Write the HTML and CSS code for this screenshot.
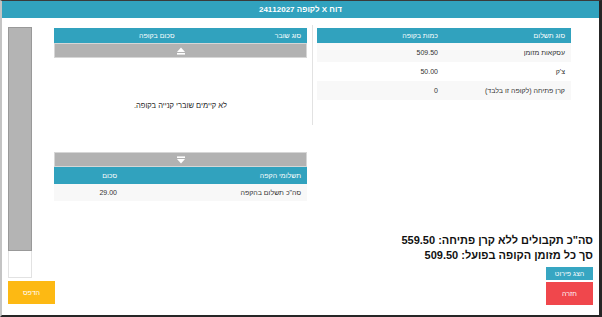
FILE: index.html
```html
<!DOCTYPE html>
<html lang="he" dir="rtl">
<head>
<meta charset="utf-8">
<title>דוח X לקופה</title>
<link rel="stylesheet" href="styles.css">
</head>
<body>
<div class="frame">
  <div class="titlebar">דוח X לקופה 24112027</div>
  <div class="workspace">
    <div class="main">
      <div class="tables">
        <div class="pay-table">
          <table class="grid">
            <thead>
              <tr><th>סוג תשלום</th><th>כמות בקופה</th></tr>
            </thead>
            <tbody>
              <tr><td>עסקאות מזומן</td><td>509.50</td></tr>
              <tr><td>צ'ק</td><td>50.00</td></tr>
              <tr><td>קרן פתיחה (לקופה זו בלבד)</td><td>0</td></tr>
            </tbody>
          </table>
        </div>
        <div class="divider"></div>
        <div class="middle">
          <table class="grid">
            <thead>
              <tr><th>סוג שובר</th><th>סכום בקופה</th></tr>
            </thead>
          </table>
          <div class="pager">
            <svg width="8" height="8" viewBox="0 0 8 8"><polygon points="0,5 4,0.5 8,5" fill="#fff"/><rect x="0" y="6" width="8" height="1.6" fill="#fff"/></svg>
          </div>
          <div class="empty">לא קיימים שוברי קנייה בקופה.</div>
          <div class="pager">
            <svg width="8" height="8" viewBox="0 0 8 8"><rect x="0" y="0.4" width="8" height="1.6" fill="#fff"/><polygon points="0,3 8,3 4,7.5" fill="#fff"/></svg>
          </div>
          <table class="grid credit">
            <thead>
              <tr><th class="wide">תשלומי הקפה</th><th>סכום</th></tr>
            </thead>
            <tbody>
              <tr><td>סה"כ תשלום בהקפה</td><td>29.00</td></tr>
            </tbody>
          </table>
        </div>
      </div>
      <div class="summary">
        <div class="total">סה"כ תקבולים ללא קרן פתיחה: 559.50</div>
        <div class="total">סך כל מזומן הקופה בפועל: 509.50</div>
        <div class="btn btn-detail">הצג פירוט</div>
        <div class="btn btn-back">חזרה</div>
      </div>
    </div>
    <div class="side">
      <div class="scroll-track"></div>
      <div class="scroll-rest"></div>
      <div class="btn btn-print">הדפס</div>
    </div>
  </div>
</div>
</body>
</html>
```
FILE: styles.css
```css
html, body {
  margin: 0;
  padding: 0;
}
body {
  font-family: "Liberation Sans", "DejaVu Sans", Arial, sans-serif;
  width: 602px;
  height: 317px;
  overflow: hidden;
  background: #fff;
}
.frame {
  box-sizing: border-box;
  width: 602px;
  height: 317px;
  border-top: 1px solid #3a3a3a;
  border-right: 3px solid #262626;
  border-bottom: 2px solid #262626;
  border-left: 2px solid #c4c4c4;
  display: flex;
  flex-direction: column;
}
.titlebar {
  flex: none;
  height: 17px;
  background: #31a2be;
  color: #fff;
  font-size: 8px;
  font-weight: bold;
  display: flex;
  align-items: center;
  justify-content: center;
}
.workspace {
  flex: 1;
  min-height: 0;
  display: flex;
  padding: 9px 6px 10px 6px;
}
.main {
  flex: 1;
  display: flex;
  flex-direction: column;
}
.tables {
  display: flex;
  align-items: flex-start;
  margin-top: 1px;
  margin-right: 22px;
}
.pay-table {
  width: 254px;
}
.divider {
  width: 1px;
  height: 100px;
  background: #e2e2e2;
  margin: -3px 4px 0 5px;
}
.middle {
  width: 253px;
}
.grid {
  width: 100%;
  border-collapse: collapse;
  table-layout: fixed;
  font-size: 7px;
}
.grid th {
  background: #31a2be;
  color: #fff;
  font-weight: normal;
  height: 15px;
  padding: 0 6px;
  text-align: right;
}
.grid td {
  height: 19px;
  padding: 0 6px;
  color: #333;
  text-align: right;
}
.grid tbody tr:nth-child(odd) td {
  background: #f8f8f8;
}
.credit th {
  height: 17px;
}
.credit td {
  height: 17px;
}
.credit .wide {
  width: 172px;
}
.pager {
  height: 15px;
  box-sizing: border-box;
  background: #b2b2b2;
  border: 1px solid #d6d6d6;
  display: flex;
  align-items: center;
  justify-content: center;
}
.empty {
  height: 94px;
  display: flex;
  align-items: center;
  justify-content: center;
  font-size: 7.5px;
  color: #1e1e1e;
}
.summary {
  margin-top: auto;
  display: flex;
  flex-direction: column;
  align-items: flex-start;
}
.total {
  font-size: 11px;
  font-weight: bold;
  line-height: 15px;
  color: #111;
}
.btn {
  width: 47px;
  color: #fff;
  font-size: 7px;
  display: flex;
  align-items: center;
  justify-content: center;
}
.btn-detail {
  margin-top: 4px;
  height: 13px;
  background: #37a6c2;
}
.btn-back {
  margin-top: 2px;
  height: 23px;
  background: #f0474c;
}
.side {
  width: 46px;
  display: flex;
  flex-direction: column;
  align-items: flex-end;
}
.scroll-track {
  width: 24px;
  height: 224px;
  box-sizing: border-box;
  background: #b4b4b4;
  border: 1px solid #999;
}
.scroll-rest {
  width: 24px;
  height: 27px;
  box-sizing: border-box;
  border: 1px solid #e2e2e2;
  border-top: none;
}
.btn-print {
  margin-top: 3px;
  height: 23px;
  background: #fdb913;
}
```
